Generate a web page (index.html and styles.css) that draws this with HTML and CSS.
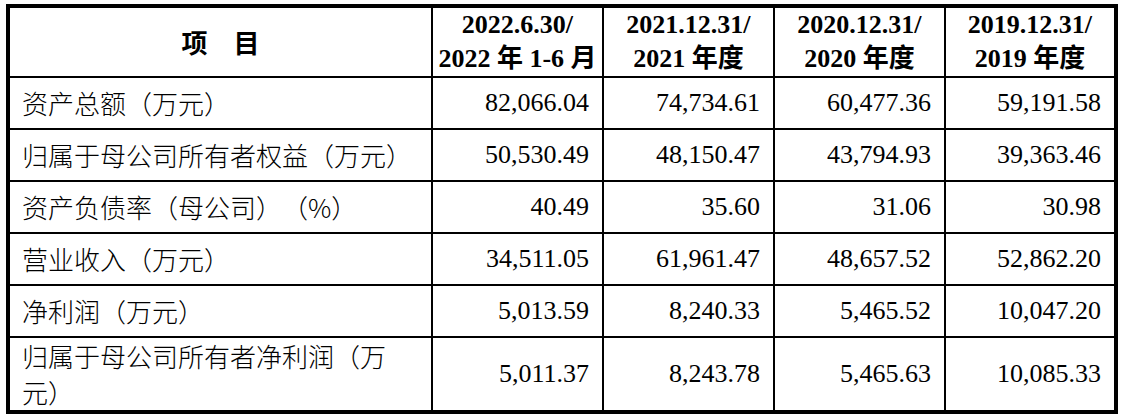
FILE: index.html
```html
<!DOCTYPE html>
<html lang="zh-CN">
<head>
    <meta charset="UTF-8">
    <title>主要财务数据</title>
    <link rel="stylesheet" href="styles.css">
</head>
<body>
    <table class="fin-table">
        <colgroup>
            <col class="col-item">
            <col class="col-num col-first">
            <col class="col-num">
            <col class="col-num">
            <col class="col-num">
        </colgroup>
        <thead>
            <tr class="head-row">
                <th class="item-head">项&emsp;目</th>
                <th>2022.6.30/<br>2022 年 1-6 月</th>
                <th>2021.12.31/<br>2021 年度</th>
                <th>2020.12.31/<br>2020 年度</th>
                <th>2019.12.31/<br>2019 年度</th>
            </tr>
        </thead>
        <tbody>
            <tr>
                <td class="label">资产总额（万元）</td>
                <td>82,066.04</td>
                <td>74,734.61</td>
                <td>60,477.36</td>
                <td>59,191.58</td>
            </tr>
            <tr>
                <td class="label">归属于母公司所有者权益（万元）</td>
                <td>50,530.49</td>
                <td>48,150.47</td>
                <td>43,794.93</td>
                <td>39,363.46</td>
            </tr>
            <tr>
                <td class="label">资产负债率（母公司）（%）</td>
                <td>40.49</td>
                <td>35.60</td>
                <td>31.06</td>
                <td>30.98</td>
            </tr>
            <tr>
                <td class="label">营业收入（万元）</td>
                <td>34,511.05</td>
                <td>61,961.47</td>
                <td>48,657.52</td>
                <td>52,862.20</td>
            </tr>
            <tr>
                <td class="label">净利润（万元）</td>
                <td>5,013.59</td>
                <td>8,240.33</td>
                <td>5,465.52</td>
                <td>10,047.20</td>
            </tr>
            <tr class="tall-row">
                <td class="label">归属于母公司所有者净利润（万元）</td>
                <td>5,011.37</td>
                <td>8,243.78</td>
                <td>5,465.63</td>
                <td>10,085.33</td>
            </tr>
        </tbody>
    </table>
</body>
</html>
```

FILE: styles.css
```css
* {
    margin: 0;
    padding: 0;
    box-sizing: border-box;
}

body {
    background: #fff;
    color: #000;
    font-family: 'Liberation Serif', 'Noto Sans CJK SC', serif;
    padding: 4px 0 0 6px;
}

.fin-table {
    border-collapse: collapse;
    table-layout: fixed;
    width: 1112px;
    border: 4px solid #000;
    font-size: 26px;
}

.col-item {
    width: 419px;
}

.col-first {
    width: 180px;
}

.col-num {
    width: 169px;
}

.fin-table th,
.fin-table td {
    border: 2px solid #000;
    vertical-align: middle;
}

.head-row th {
    height: 69px;
    font-weight: bold;
    text-align: center;
    line-height: 34px;
}

.item-head {
    font-family: 'Noto Sans CJK SC', sans-serif;
    font-size: 26px;
    text-spacing-trim: space-all;
}

.fin-table td {
    height: 52px;
    text-align: right;
    padding: 0 13px 0 12px;
}

.fin-table td.label {
    text-align: left;
    font-family: 'Noto Sans CJK SC', sans-serif;
    font-weight: 300;
    font-size: 26px;
    line-height: 36px;
    padding-right: 6px;
    text-spacing-trim: space-all;
}

.tall-row td {
    height: 73px;
}
```
